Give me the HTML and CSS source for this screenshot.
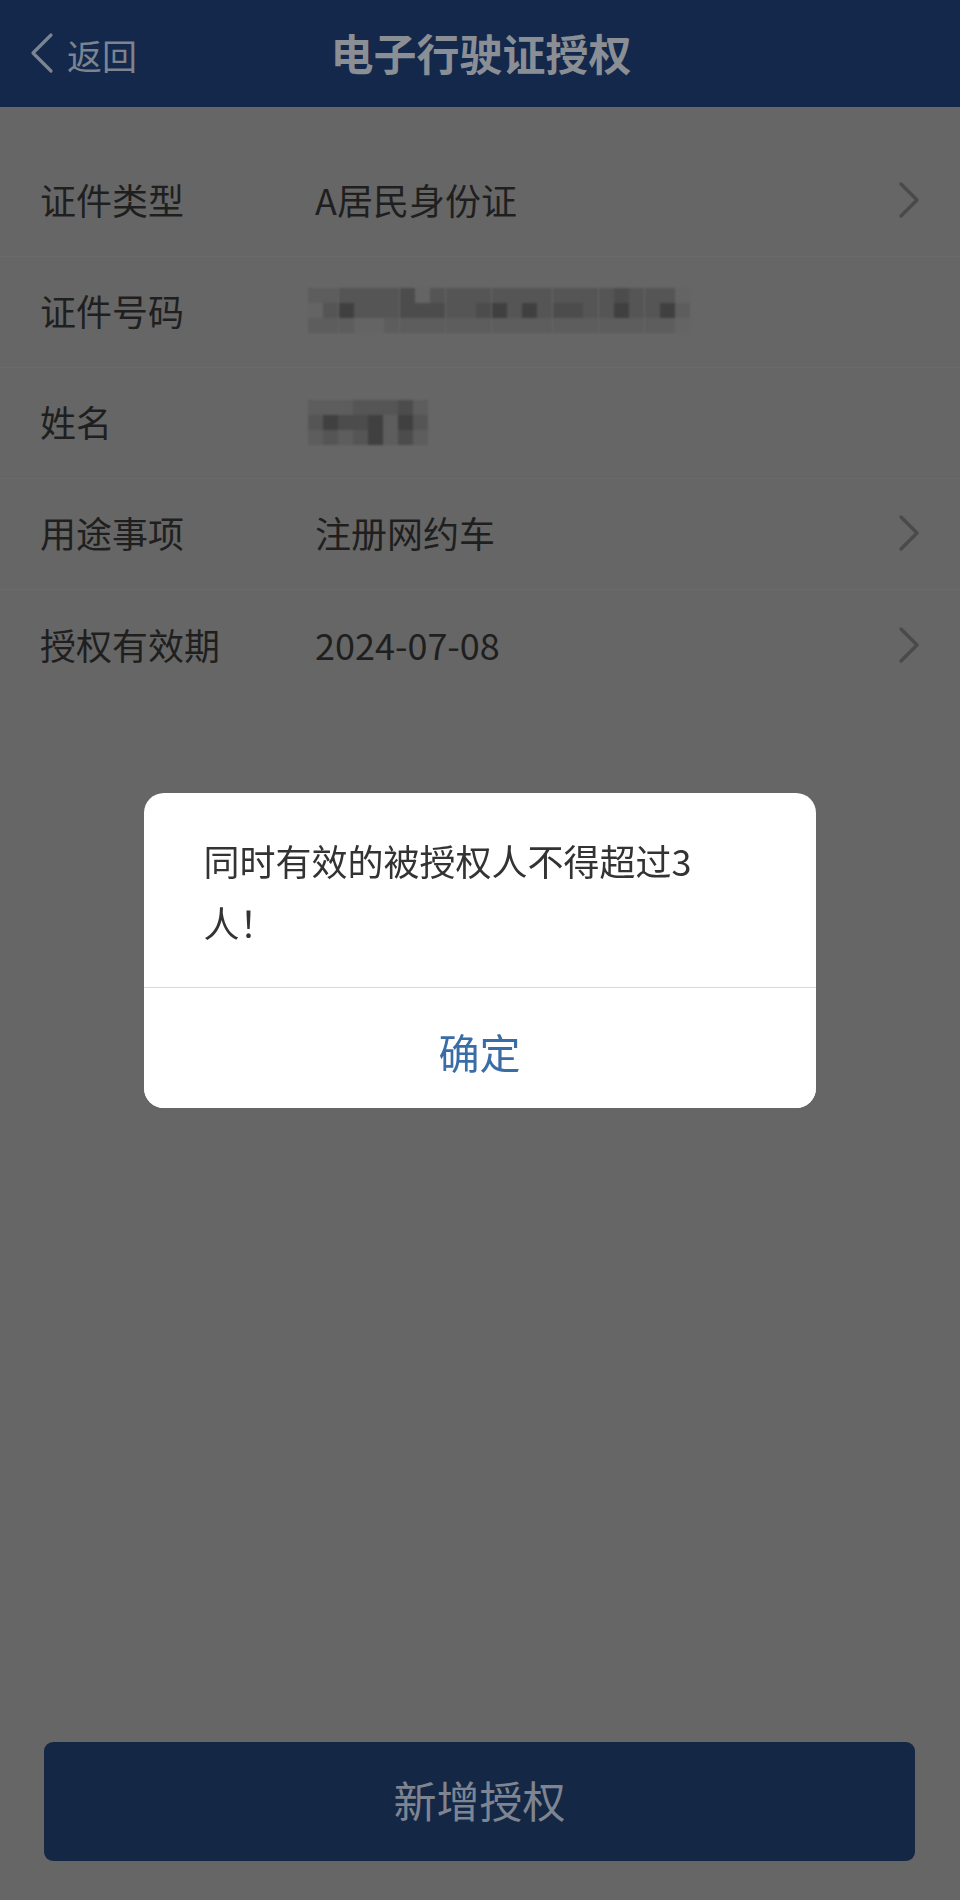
FILE: index.html
```html
<!DOCTYPE html>
<html lang="zh-CN">
<head>
<meta charset="utf-8">
<title>电子行驶证授权</title>
<link rel="stylesheet" href="styles.css">
</head>
<body>
<div class="page">
  <header class="topbar">
    <div class="back">
      <svg class="back-icon" width="26" height="42" viewBox="0 0 26 42"><path d="M22 3 L4 21 L22 39" fill="none" stroke="#7b8490" stroke-width="3.2" stroke-linecap="round" stroke-linejoin="round"/></svg>
      <span class="back-text">返回</span>
    </div>
    <h1 class="title">电子行驶证授权</h1>
  </header>

  <section class="form">
    <div class="row">
      <span class="label">证件类型</span>
      <span class="value">A居民身份证</span>
      <svg class="chev" width="22" height="38" viewBox="0 0 22 38"><path d="M3 3 L19 19 L3 35" fill="none" stroke="#4a4a4a" stroke-width="3.4" stroke-linecap="round" stroke-linejoin="round"/></svg>
    </div>
    <div class="row">
      <span class="label">证件号码</span>
      <div class="mosaic mosaic-id">
        <i class="s1"></i><i class="s1"></i><i class="s2"></i><i class="s2"></i><i class="s2"></i><i class="s2"></i><i class="s3"></i><i class="s0"></i><i class="s2"></i><i class="s2"></i><i class="s2"></i><i class="s2"></i><i class="s2"></i><i class="s2"></i><i class="s2"></i><i class="s2"></i><i class="s2"></i><i class="s2"></i><i class="s2"></i><i class="s2"></i><i class="s3"></i><i class="s2"></i><i class="s2"></i><i class="s2"></i><i class="s0"></i>
        <i class="s0"></i><i class="s2"></i><i class="s4"></i><i class="s2"></i><i class="s2"></i><i class="s2"></i><i class="s3"></i><i class="s3"></i><i class="s3"></i><i class="s2"></i><i class="s2"></i><i class="s3"></i><i class="s4"></i><i class="s2"></i><i class="s4"></i><i class="s2"></i><i class="s3"></i><i class="s3"></i><i class="s2"></i><i class="s2"></i><i class="s4"></i><i class="s2"></i><i class="s2"></i><i class="s4"></i><i class="s1"></i>
        <i class="s1"></i><i class="s1"></i><i class="s1"></i><i class="s0"></i><i class="s0"></i><i class="s1"></i><i class="s1"></i><i class="s1"></i><i class="s1"></i><i class="s1"></i><i class="s1"></i><i class="s1"></i><i class="s1"></i><i class="s1"></i><i class="s1"></i><i class="s1"></i><i class="s1"></i><i class="s1"></i><i class="s1"></i><i class="s1"></i><i class="s1"></i><i class="s1"></i><i class="s1"></i><i class="s1"></i><i class="s0"></i>
      </div>
    </div>
    <div class="row">
      <span class="label">姓名</span>
      <div class="mosaic mosaic-name">
        <i class="s1"></i><i class="s1"></i><i class="s1"></i><i class="s2"></i><i class="s2"></i><i class="s2"></i><i class="s3"></i><i class="s1"></i>
        <i class="s2"></i><i class="s4"></i><i class="s3"></i><i class="s3"></i><i class="s4"></i><i class="s1"></i><i class="s4"></i><i class="s2"></i>
        <i class="s1"></i><i class="s2"></i><i class="s1"></i><i class="s2"></i><i class="s4"></i><i class="s1"></i><i class="s3"></i><i class="s1"></i>
      </div>
    </div>
    <div class="row">
      <span class="label">用途事项</span>
      <span class="value">注册网约车</span>
      <svg class="chev" width="22" height="38" viewBox="0 0 22 38"><path d="M3 3 L19 19 L3 35" fill="none" stroke="#4a4a4a" stroke-width="3.4" stroke-linecap="round" stroke-linejoin="round"/></svg>
    </div>
    <div class="row row-last">
      <span class="label">授权有效期</span>
      <span class="value">2024-07-08</span>
      <svg class="chev" width="22" height="38" viewBox="0 0 22 38"><path d="M3 3 L19 19 L3 35" fill="none" stroke="#4a4a4a" stroke-width="3.4" stroke-linecap="round" stroke-linejoin="round"/></svg>
    </div>
  </section>

  <footer class="footer">
    <button class="add-btn" type="button">新增授权</button>
  </footer>
</div>

<div class="mask">
  <div class="dialog">
    <p class="dialog-msg">同时有效的被授权人不得超过3<br>人！</p>
    <button class="dialog-ok" type="button">确定</button>
  </div>
</div>
</body>
</html>
```
FILE: styles.css
```css
* {
  box-sizing: border-box;
}

html, body {
  margin: 0;
  padding: 0;
}

body {
  font-family: "Noto Sans CJK SC", "Noto Sans", "Liberation Sans", sans-serif;
  background: #666666;
  width: 960px;
  height: 1900px;
  overflow: hidden;
}

.page {
  height: 1900px;
  display: flex;
  flex-direction: column;
  background: #666666;
}

.topbar {
  position: relative;
  height: 107px;
  background: #13284a;
  display: flex;
  align-items: center;
  justify-content: center;
  flex-shrink: 0;
}

.back {
  position: absolute;
  left: 29px;
  top: 0;
  bottom: 0;
  display: flex;
  align-items: center;
  gap: 12px;
}

.back-icon {
  display: block;
  margin-top: -2px;
}

.back-text {
  font-size: 35px;
  color: #7b8490;
  line-height: 1;
  margin-top: 2px;
}

.title {
  margin: 0;
  font-size: 43px;
  font-weight: 700;
  color: #8a8e95;
  line-height: 1;
  margin-left: 2px;
  margin-top: -2px;
}

.form {
  margin-top: 39px;
  display: flex;
  flex-direction: column;
}

.row {
  height: 111px;
  display: flex;
  align-items: center;
  padding: 0 40px 0 40px;
  border-bottom: 1px solid #6b6b6b;
}

.row-last {
  border-bottom: none;
}

.label {
  width: 275px;
  flex-shrink: 0;
  font-size: 36px;
  color: #1f1f1f;
  line-height: 1;
  margin-top: -4px;
}

.value {
  flex: 1;
  font-size: 36px;
  color: #1f1f1f;
  line-height: 1;
  margin-top: -4px;
}

.chev {
  display: block;
  margin-top: -2px;
}

.mosaic {
  display: grid;
  filter: blur(1.2px);
  margin-left: -7px;
}

.mosaic i {
  display: block;
  width: 15px;
  height: 15px;
}

.mosaic-id {
  grid-template-columns: repeat(25, 15.3px);
  margin-top: -4px;
}

.mosaic-name {
  grid-template-columns: repeat(8, 15px);
  margin-top: -2px;
}

.s0 { background: #646464; }
.s1 { background: #5d5d5d; }
.s2 { background: #555555; }
.s3 { background: #4c4c4c; }
.s4 { background: #404040; }

.footer {
  margin-top: auto;
  padding: 0 45px 39px 44px;
}

.add-btn {
  width: 100%;
  height: 119px;
  border: none;
  border-radius: 9px;
  background: #142846;
  color: #7f8590;
  font-family: inherit;
  font-size: 43px;
  line-height: 1;
  padding: 0;
  padding-bottom: 4px;
}

.mask {
  position: fixed;
  inset: 0;
  display: flex;
  align-items: center;
  justify-content: center;
}

.dialog {
  width: 672px;
  background: #ffffff;
  border-radius: 20px;
  overflow: hidden;
  margin-left: -1px;
}

.dialog-msg {
  margin: 0;
  padding: 36px 60px 34px 60px;
  font-size: 36px;
  line-height: 62px;
  color: #333333;
  border-bottom: 1px solid #d9d9d9;
}

.dialog-ok {
  display: block;
  width: 100%;
  height: 120px;
  border: none;
  background: #ffffff;
  color: #3a6da6;
  font-family: inherit;
  font-size: 41px;
  line-height: 1;
  padding: 8px 0 0 0;
}
```
